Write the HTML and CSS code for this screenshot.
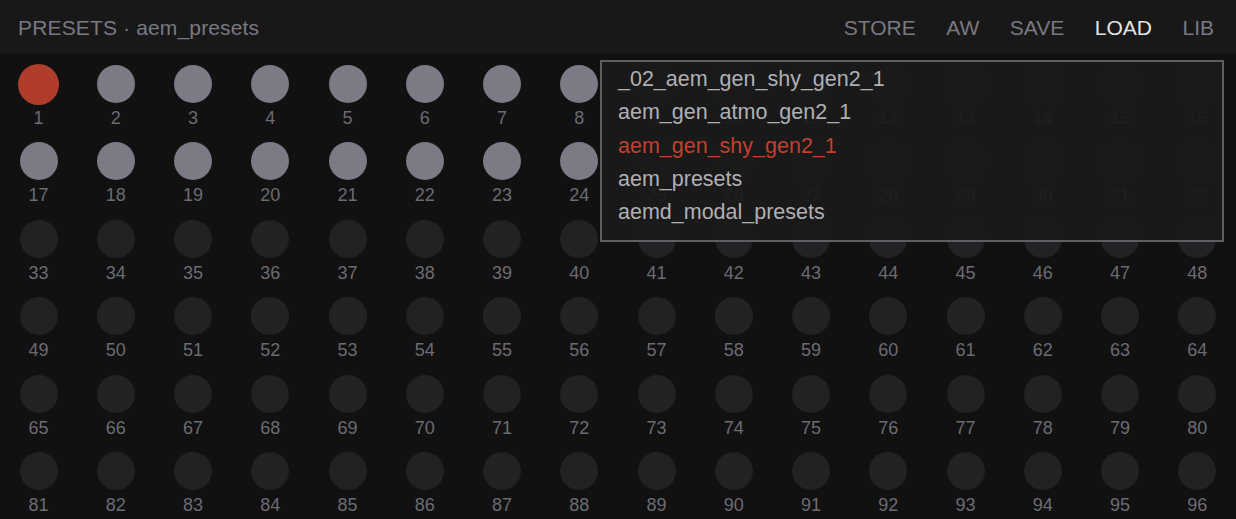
FILE: index.html
```html
<!DOCTYPE html>
<html lang="en">
  <head>
    <meta charset="UTF-8" />
    <meta name="viewport" content="width=device-width, initial-scale=1.0" />
    <title>Presets</title>
    <link rel="stylesheet" href="styles.css">
  </head>

  <body>
    <div id="header">
      <div class="title">PRESETS · aem_presets</div>
      <div class="nav">
        <span>STORE</span>
        <span>AW</span>
        <span>SAVE</span>
        <span class="active">LOAD</span>
        <span>LIB</span>
      </div>
    </div>

    <div id="grid"></div>

    <!-- library dropdown -->
    <div id="load-menu">
      <div class="item">_02_aem_gen_shy_gen2_1</div>
      <div class="item">aem_gen_atmo_gen2_1</div>
      <div class="item current">aem_gen_shy_gen2_1</div>
      <div class="item">aem_presets</div>
      <div class="item">aemd_modal_presets</div>
    </div>

    <script>
      const grid = document.getElementById("grid");
      for (let i = 1; i <= 96; i++) {
        const slot = document.createElement("div");
        slot.className = "slot";
        let state = "empty";
        if (i == 1) state = "selected";
        else if (i <= 8 || (i >= 17 && i <= 24)) state = "filled";
        slot.innerHTML = '<div class="dot ' + state + '"></div><div class="num">' + i + "</div>";
        grid.appendChild(slot);
      }
    </script>
  </body>
</html>
```

FILE: styles.css
```css
* {
  font-family: "Liberation Sans", Arial, sans-serif;
  box-sizing: border-box;
}

body {
  overflow: hidden;
  margin: 0;
  padding: 0;
  background-color: #111111;
  position: relative;
}

#header {
  height: 54px;
  background-color: #181818;
  display: flex;
  justify-content: space-between;
  align-items: center;
  padding: 2px 22px 0 18px;
  font-size: 21px;
  color: #7a7981;
}

#header .title {
  letter-spacing: 0.15px;
}

#header .nav {
  display: flex;
  gap: 30.5px;
}

#header .nav .active {
  color: #e4e4e6;
}

#grid {
  display: grid;
  grid-template-columns: repeat(16, 1fr);
  grid-auto-rows: 77.4px;
  padding-top: 11px;
}

.slot {
  display: flex;
  flex-direction: column;
  align-items: center;
}

.dot {
  width: 38px;
  height: 38px;
  border-radius: 50%;
  background-color: #222224;
}
.dot.filled {
  background-color: #7b7b85;
}
/* the selected slot is drawn a little larger */
.dot.selected {
  width: 41px;
  height: 41px;
  margin: -1px 0 -2px;
  background-color: #b03d2b;
}

.num {
  margin-top: 5px;
  font-size: 18px;
  line-height: 20px;
  color: #6c6b73;
}

#load-menu {
  position: absolute;
  top: 60px;
  right: 12px;
  width: 624px;
  height: 182px;
  border: 2px solid #5e5e63;
  background-color: rgba(26, 26, 26, 0.95);
  padding: 1px 16px 0;
}

#load-menu .item {
  font-size: 21.5px;
  line-height: 33.3px;
  color: #b0b0b4;
}

#load-menu .item.current {
  color: #c2402d;
}
```
